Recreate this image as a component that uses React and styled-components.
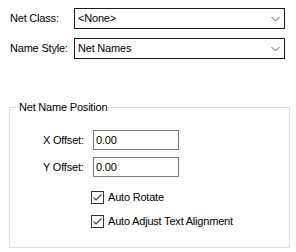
import React from 'react';
import styled, { createGlobalStyle } from 'styled-components';

const GlobalStyle = createGlobalStyle`
	html, body {
		margin: 0;
		padding: 0;
		background: #fff;
	}
	body {
		font-family: 'Liberation Sans', Arial, sans-serif;
		font-size: 11px;
		letter-spacing: -0.2px;
		color: #000;
	}
`;

const Panel = styled.div`
	width: 296px;
	height: 252px;
	box-sizing: border-box;
	padding: 8px 0 0 9px;
	display: flex;
	flex-direction: column;
`;

const FieldRow = styled.div`
	display: flex;
	align-items: center;
	height: ${(p) => p.$height || 21}px;
	margin-bottom: ${(p) => p.$gap || 0}px;
`;

const Label = styled.span`
	width: ${(p) => p.$width}px;
	padding-left: ${(p) => p.$indent || 0}px;
	box-sizing: border-box;
	flex-shrink: 0;
	white-space: nowrap;
	line-height: 13px;
`;

const Combo = styled.div`
	width: 211px;
	height: 21px;
	box-sizing: border-box;
	border: 1px solid #1a1a1a;
	display: flex;
	align-items: center;
	justify-content: space-between;
	padding: 0 4px 0 3px;
	line-height: 13px;
`;

const Chevron = () => (
	<svg width="9" height="6" viewBox="0 0 9 6">
		<path d="M0.5 1 L4.5 5 L8.5 1" fill="none" stroke="#606060" strokeWidth="1" />
	</svg>
);

const Group = styled.fieldset`
	margin: 42px 0 0 0;
	width: 281px;
	height: 147px;
	box-sizing: border-box;
	border: 1px solid #dcdcdc;
	padding: 16px 0 0 8px;
	display: flex;
	flex-direction: column;
`;

const Legend = styled.legend`
	padding: 0 1px;
	line-height: 13px;
`;

const TextBox = styled.div`
	width: 86px;
	height: 20px;
	box-sizing: border-box;
	border: 1px solid #7a7a7a;
	padding: 0 0 0 2px;
	display: flex;
	align-items: center;
	line-height: 13px;
`;

const Check = styled.label`
	display: flex;
	align-items: center;
	gap: 4px;
	margin-left: 73px;
	height: 13px;
	margin-top: ${(p) => p.$top}px;
	line-height: 13px;
`;

const Box = styled.span`
	width: 13px;
	height: 13px;
	box-sizing: border-box;
	border: 1px solid #333;
	background: #fff;
	display: flex;
	align-items: center;
	justify-content: center;
`;

const CheckMark = () => (
	<svg width="11" height="11" viewBox="0 0 11 11">
		<path d="M1.5 5.5 L4 8 L9.5 2.5" fill="none" stroke="#444" strokeWidth="1.1" />
	</svg>
);

const App = () => (
	<>
		<GlobalStyle />
		<Panel>
			<FieldRow $gap={9}>
				<Label $width={65} $indent={1}>Net Class:</Label>
				<Combo>
					<span>&lt;None&gt;</span>
					<Chevron />
				</Combo>
			</FieldRow>
			<FieldRow>
				<Label $width={65} $indent={1}>Name Style:</Label>
				<Combo>
					<span>Net Names</span>
					<Chevron />
				</Combo>
			</FieldRow>
			<Group>
				<Legend>Net Name Position</Legend>
				<FieldRow $height={20} $gap={7}>
					<Label $width={75} $indent={25}>X Offset:</Label>
					<TextBox>0.00</TextBox>
				</FieldRow>
				<FieldRow $height={20}>
					<Label $width={75} $indent={25}>Y Offset:</Label>
					<TextBox>0.00</TextBox>
				</FieldRow>
				<Check $top={14}>
					<Box><CheckMark /></Box>
					Auto Rotate
				</Check>
				<Check $top={11}>
					<Box><CheckMark /></Box>
					Auto Adjust Text Alignment
				</Check>
			</Group>
		</Panel>
	</>
);

export default App;
